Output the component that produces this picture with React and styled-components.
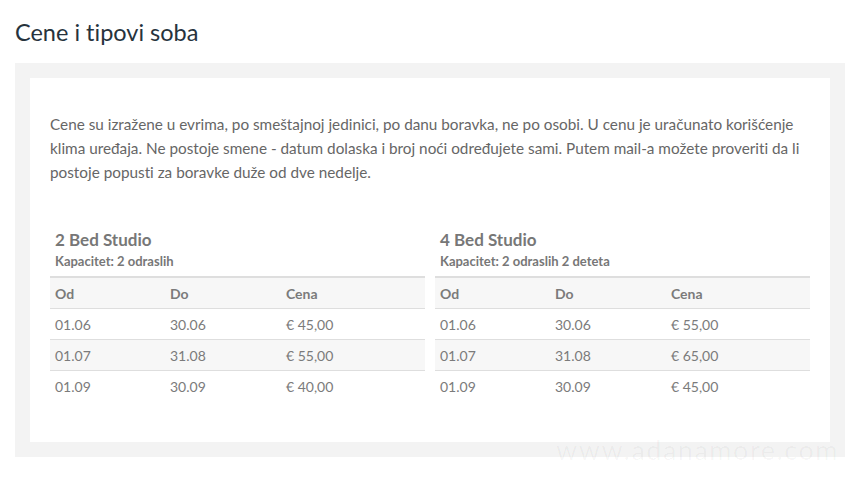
import React from "react";
import styled, { createGlobalStyle } from "styled-components";

const Global = createGlobalStyle`
  html, body { margin: 0; padding: 0; background: #fff; }
  body {
    font-family: Lato, "Open Sans", sans-serif;
    font-variant-ligatures: none;
    font-feature-settings: "liga" 0, "clig" 0;
  }
`;

const Page = styled.div`
  position: relative;
  width: 861px;
  height: 480px;
  padding: 16px 16px 0 15px;
  box-sizing: border-box;
  overflow: hidden;
`;

const Title = styled.h2`
  margin: 0 0 15px;
  font-size: 23.5px;
  line-height: 32px;
  font-weight: 400;
  color: #27333d;
`;

const Outer = styled.div`
  background: #f3f3f3;
  padding: 15px;
  width: 830px;
  box-sizing: border-box;
`;

const Inner = styled.div`
  background: #fff;
  padding: 34px 20px 41px;
`;

const Text = styled.p`
  margin: 0 0 44px;
  font-size: 15.3px;
  line-height: 24px;
  color: #666;
`;

const Tables = styled.div`
  display: grid;
  grid-template-columns: 375px 375px;
  column-gap: 10px;
`;

const Room = styled.div``;

const RoomName = styled.div`
  padding-left: 5px;
  font-size: 17px;
  line-height: 24px;
  font-weight: 700;
  color: #777;
`;

const Capacity = styled.div`
  padding-left: 5px;
  font-size: 13px;
  line-height: 18px;
  font-weight: 700;
  color: #777;
  margin-bottom: 6px;
`;

const Table = styled.table`
  width: 100%;
  border-collapse: collapse;
  border-top: 2px solid #dedede;
`;

const Row = styled.tr`
  background: ${(p) => (p.$shaded ? "#f7f7f7" : "#fff")};
  border-bottom: ${(p) => (p.$last ? "none" : "1px solid #dedede")};
`;

const Th = styled.th`
  text-align: left;
  font-size: 14px;
  font-weight: 700;
  color: #7b7b7b;
  height: 30px;
  padding: 0 5px;
  width: ${(p) => p.$w || "auto"};
`;

const Td = styled.td`
  font-size: 14px;
  color: #7b7b7b;
  height: 30px;
  padding: 0 5px;
`;

const Watermark = styled.div`
  position: absolute;
  left: 556px;
  top: 433px;
  font-size: 27px;
  letter-spacing: 1.5px;
  color: rgba(0, 0, 0, 0.035);
  font-family: Lato, sans-serif;
`;

const rooms = [
  {
    name: "2 Bed Studio",
    cap: "Kapacitet: 2 odraslih",
    rows: [
      ["01.06", "30.06", "€ 45,00"],
      ["01.07", "31.08", "€ 55,00"],
      ["01.09", "30.09", "€ 40,00"],
    ],
  },
  {
    name: "4 Bed Studio",
    cap: "Kapacitet: 2 odraslih 2 deteta",
    rows: [
      ["01.06", "30.06", "€ 55,00"],
      ["01.07", "31.08", "€ 65,00"],
      ["01.09", "30.09", "€ 45,00"],
    ],
  },
];

export default function App() {
  return (
    <>
      <Global />
      <Page>
        <Title>Cene i tipovi soba</Title>
        <Outer>
          <Inner>
            <Text>
              Cene su izražene u evrima, po smeštajnoj jedinici, po danu boravka, ne po osobi. U cenu je uračunato korišćenje klima uređaja. Ne postoje smene - datum dolaska i broj noći određujete sami. Putem mail-a možete proveriti da li postoje popusti za boravke duže od dve nedelje.
            </Text>
            <Tables>
              {rooms.map((r) => (
                <Room key={r.name}>
                  <RoomName>{r.name}</RoomName>
                  <Capacity>{r.cap}</Capacity>
                  <Table>
                    <tbody>
                      <Row $shaded>
                        <Th $w="105px">Od</Th>
                        <Th $w="106px">Do</Th>
                        <Th>Cena</Th>
                      </Row>
                      {r.rows.map((row, i) => (
                        <Row key={i} $shaded={i === 1} $last={i === r.rows.length - 1}>
                          {row.map((c, j) => (
                            <Td key={j}>{c}</Td>
                          ))}
                        </Row>
                      ))}
                    </tbody>
                  </Table>
                </Room>
              ))}
            </Tables>
          </Inner>
        </Outer>
        <Watermark>www.adanamore.com</Watermark>
      </Page>
    </>
  );
}
